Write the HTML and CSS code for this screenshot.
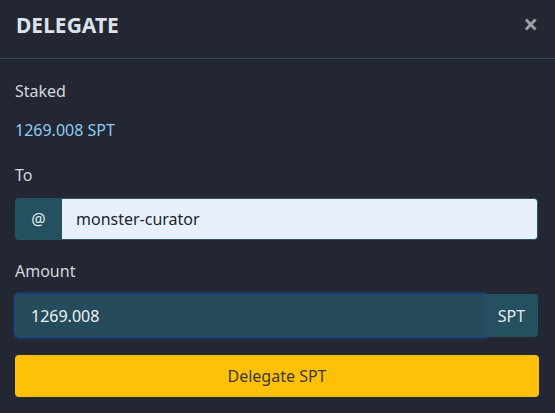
FILE: index.html
```html
<!DOCTYPE html>
<html>
<head>
<meta charset="utf-8">
<link rel="stylesheet" href="styles.css">
</head>
<body>
<div class="modal">
  <div class="header">
    <div class="title">DELEGATE</div>
    <div class="close">&times;</div>
  </div>
  <div class="body">
    <div class="label first">Staked</div>
    <div class="staked">1269.008 SPT</div>
    <div class="label to">To</div>
    <div class="group">
      <div class="addon at">@</div>
      <div class="field light">monster-curator</div>
    </div>
    <div class="label amount">Amount</div>
    <div class="group dark">
      <div class="field focus">1269.008</div>
      <div class="addon spt">SPT</div>
    </div>
    <div class="btn">Delegate SPT</div>
  </div>
</div>
</body>
</html>
```

FILE: styles.css
```css
html, body {
  margin: 0;
  padding: 0;
  background: #232733;
}
body {
  font-family: "Noto Sans", "Open Sans", sans-serif;
  font-size: 16px;
  line-height: 24px;
  color: #d3d7dc;
}
.modal {
  width: 555px;
  height: 413px;
  background: #232733;
}
.header {
  display: flex;
  justify-content: space-between;
  align-items: center;
  height: 59px;
  padding: 0 17px 0 16px;
  border-bottom: 1px solid #3a4758;
  box-sizing: border-box;
}
.title {
  font-size: 21px;
  font-weight: 700;
  color: #dce2e9;
  margin-top: -8px;
}
.close {
  font-size: 26px;
  font-weight: 700;
  color: #9aa0a7;
  margin-top: -10px;
  line-height: 26px;
}
.body {
  display: flex;
  flex-direction: column;
  padding: 20px 16px 0 15px;
}
.label {
  color: #d3d7dc;
}
.staked {
  margin-top: 15px;
  color: #8ecbf1;
}
.to { margin-top: 21px; }
.amount { margin-top: 19px; }
.group {
  display: flex;
  height: 42px;
  margin-top: 11px;
  margin-right: 1px;
  border-radius: 4px;
}
.group.dark {
  height: 43px;
  margin-top: 11px;
}
.addon {
  display: flex;
  align-items: center;
  justify-content: center;
  background: #25505f;
  color: #e6eaee;
}
.at {
  width: 47px;
  border-radius: 4px 0 0 4px;
}
.spt {
  width: 53px;
  border-radius: 0 4px 4px 0;
}
.field {
  flex: 1;
  display: flex;
  align-items: center;
}
.light {
  background: #e8f0fe;
  color: #212529;
  padding-left: 14px;
  border-radius: 0 4px 4px 0;
  border: 1px solid #2a5566;
  border-left: none;
}
.focus {
  background: #264c5b;
  color: #eef1f4;
  padding-left: 15px;
  border: 1px solid #1f4f82;
  border-radius: 4px 0 0 4px;
  box-shadow: 0 0 0 2px #1d3a60;
}
.btn {
  margin-top: 18px;
  height: 42px;
  display: flex;
  align-items: center;
  justify-content: center;
  background: #ffc107;
  color: #3b3a34;
  border-radius: 4px;
}
```
